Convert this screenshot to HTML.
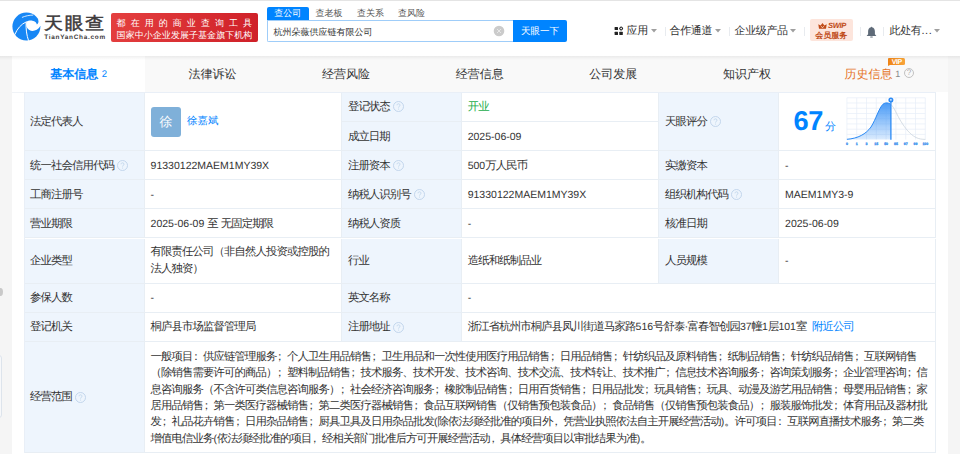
<!DOCTYPE html>
<html><head><meta charset="utf-8">
<style>
*{margin:0;padding:0;box-sizing:border-box}
html,body{width:960px;height:454px;overflow:hidden}
body{background:#f5f5f5;font-family:"Liberation Sans",sans-serif;color:#333;position:relative;text-rendering:geometricPrecision}
.a{position:absolute;white-space:nowrap}
#topline{position:absolute;left:0;top:0;width:960px;height:1px;background:#e4e4e4}
#hdr{position:absolute;left:0;top:1px;width:960px;height:55px;background:#fff}
#shd{position:absolute;left:0;top:56px;width:960px;height:4px;background:linear-gradient(rgba(0,0,0,.06),rgba(0,0,0,0));z-index:5}
#wrap{position:absolute;left:12px;top:92px;width:936px;height:362px;background:#fff}
.sep{position:absolute;top:27px;width:1px;height:8.7px;background:#e8ebef}
.caret{position:absolute;top:29.2px;width:6px;height:3.4px}
.nav{position:absolute;top:24.4px;font-size:11px;letter-spacing:-0.35px;line-height:14px;color:#333;white-space:nowrap}
#tabs{position:absolute;left:12px;top:56px;width:935.5px;height:36px;background:#f9f9f9}
.tab{position:absolute;top:0;height:36px;width:133.64px;text-align:center;font-size:12px;line-height:36px;color:#333;white-space:nowrap}
.c{position:absolute;border-right:1px solid #e8eef4;border-bottom:1px solid #e8eef4}
.lb{background:#eef5fd}
.t{position:absolute;font-size:11.4px;letter-spacing:-0.9px;line-height:14px;color:#333;white-space:nowrap}
.l{font-weight:normal;font-size:10.5px;letter-spacing:0}
.q{display:inline-block;vertical-align:-2.3px;margin-left:3.2px}
.p{font-style:normal;position:relative;left:-2.4px}
</style></head><body>
<div id="topline"></div>
<div id="hdr"></div>
<svg class="a" style="left:0;top:0" width="50" height="50" viewBox="0 0 50 50">
<circle cx="26.4" cy="26.6" r="14" fill="#1787f5"/>
<path d="M43 16 L38.1 19.4 C38.9 21.2 38.6 23.3 36.9 24.4 C36.5 22.6 35.1 21.1 32.3 20.7 C30 20.4 27.8 20.9 26.2 22 C26 24 26.2 26.5 27 27.8 C29.5 32.3 36.5 32.3 40.4 26.1 L43 26.1 Z" fill="#fff"/>
<path d="M22.3 17.3 C25.5 15.9 29 15.2 32.8 15.1" stroke="#fff" stroke-width="0.8" fill="none" stroke-linecap="round"/>
<path d="M14.7 34.8 C17.4 28.5 21 24.2 26.6 21.7" stroke="#fff" stroke-width="1" fill="none"/>
<path d="M26.1 22.5 C25.8 29 26.6 35 28.6 40.8" stroke="#fff" stroke-width="1" fill="none"/>
</svg>
<div class="a" style="left:44.2px;top:12.8px;font-size:17.2px;line-height:20px;letter-spacing:1.6px;transform:scaleX(1.1);transform-origin:0 0;color:#3d3a3b;-webkit-text-stroke:0.5px #3d3a3b">天眼查</div>
<div class="a" style="left:44.2px;top:33.5px;font-size:6.4px;line-height:8px;letter-spacing:0.74px;color:#3d3a3b;font-weight:bold">TianYanCha.com</div>
<div class="a" style="left:111px;top:12.8px;width:146.7px;height:29.2px;border-radius:2px;background:linear-gradient(100deg,#e43f3f,#cf2028);color:#fff;font-size:10px">
<div class="a" style="left:5.6px;top:5px;line-height:10px;font-size:9px;letter-spacing:5.05px">都在用的商业查询工具</div>
<div class="a" style="left:5.6px;top:17px;line-height:10px;font-size:9px;letter-spacing:0.05px">国家中小企业发展子基金旗下机构</div>
</div>
<div class="a" style="left:267px;top:6.5px;width:41.5px;height:13.5px;background:#0084ff;border-radius:2px 2px 0 0;color:#fff;font-size:9px;line-height:13.5px;text-align:center">查公司</div>
<div class="a" style="left:315.5px;top:6.5px;font-size:9px;line-height:13.5px;color:#555">查老板</div>
<div class="a" style="left:357px;top:6.5px;font-size:9px;line-height:13.5px;color:#555">查关系</div>
<div class="a" style="left:398px;top:6.5px;font-size:9px;line-height:13.5px;color:#555">查风险</div>
<div class="a" style="left:267px;top:19.5px;width:247px;height:22.7px;border:1.2px solid #9fcdf9;border-right:none;border-radius:0 0 0 2px;background:#fff"></div>
<div class="a" style="left:273.5px;top:24.5px;font-size:9px;line-height:14px;color:#333">杭州朵薇供应链有限公司</div>
<svg class="a" style="left:492.7px;top:24.6px" width="12" height="12" viewBox="0 0 12 12"><circle cx="6" cy="6" r="5.3" fill="#cbcbcb"/><path d="M4 4 L8 8 M8 4 L4 8" stroke="#eee" stroke-width="0.8"/></svg>
<div class="a" style="left:513px;top:19.6px;width:54px;height:22.5px;background:#0084ff;border-radius:0 2px 2px 0;color:#fff;font-size:9.5px;line-height:24.5px;text-align:center">天眼一下</div>
<svg class="a" style="left:612px;top:24px" width="14" height="14" viewBox="612 24 14 14"><rect x="614.6" y="26.9" width="3.4" height="3.2" rx="0.5" fill="#222"/><rect x="614.6" y="31.8" width="3.4" height="3.2" rx="0.5" fill="#222"/><rect x="619.3" y="31.8" width="3.5" height="3.2" rx="0.5" fill="#222"/><rect x="619.9" y="27.2" width="2.5" height="2.5" rx="0.6" transform="rotate(45 621.1 28.45)" fill="none" stroke="#222" stroke-width="1"/></svg>
<div class="nav" style="left:626.5px">应用</div><svg class="caret" style="left:650.7px" width="6" height="3.4" viewBox="0 0 6 3.4"><path d="M0 0 H6 L3 3.4 Z" fill="#9f9f9f"/></svg>
<div class="sep" style="left:664.5px"></div>
<div class="nav" style="left:669.5px">合作通道</div><svg class="caret" style="left:715.1px" width="6" height="3.4" viewBox="0 0 6 3.4"><path d="M0 0 H6 L3 3.4 Z" fill="#9f9f9f"/></svg>
<div class="sep" style="left:729px"></div>
<div class="nav" style="left:734.5px">企业级产品</div><svg class="caret" style="left:790.4px" width="6" height="3.4" viewBox="0 0 6 3.4"><path d="M0 0 H6 L3 3.4 Z" fill="#9f9f9f"/></svg>
<div class="sep" style="left:804px"></div>
<div class="a" style="left:810px;top:18.8px;width:43px;height:22.3px;top:19.1px;background:#fde5dc;border-radius:2px"></div>
<svg class="a" style="left:818.2px;top:22.8px" width="9" height="6" viewBox="0 0 9 6"><path d="M0.3 1.2 L2.6 2.6 L4.5 0 L6.4 2.6 L8.7 1.2 L8 5.8 L1 5.8 Z" fill="#c04b17"/><path d="M3.2 3.2 L4.5 4.8 L5.8 3.2" stroke="#fde5dc" stroke-width="0.8" fill="none"/></svg>
<div class="a" style="left:828px;top:21.3px;font-size:7.6px;line-height:9px;color:#c04b17;font-weight:bold;font-style:italic;letter-spacing:-0.4px">SWIP</div>
<div class="a" style="left:815.2px;top:30.5px;font-size:8px;line-height:10px;color:#c04b17;font-weight:bold">会员服务</div>
<div class="sep" style="left:859.5px"></div>
<svg class="a" style="left:866.3px;top:25.8px" width="11" height="12" viewBox="0 0 11 12"><path d="M5.5 0.4 L6 1.3 C8 1.8 8.9 3.4 8.9 5.6 L8.9 8.2 L10.4 9.9 L0.6 9.9 L2.1 8.2 L2.1 5.6 C2.1 3.4 3 1.8 5 1.3 Z" fill="#5e6a78"/><rect x="4.2" y="10.5" width="2.6" height="1.1" rx="0.5" fill="#5e6a78"/></svg>
<div class="sep" style="left:883px"></div>
<div class="nav" style="left:889.5px">此处有<span style="letter-spacing:0.6px">...</span></div><svg class="caret" style="left:934.4px" width="6" height="3.4" viewBox="0 0 6 3.4"><path d="M0 0 H6 L3 3.4 Z" fill="#9f9f9f"/></svg>

<div id="tabs">
  <div class="tab" style="left:0;width:133.1px;background:#fff;color:#0084ff;font-weight:bold">基本信息<span style="font-weight:normal;font-size:9.5px;margin-left:3.5px;vertical-align:1px">2</span></div>
  <div class="tab" style="left:133.64px">法律诉讼</div>
  <div class="tab" style="left:267.28px">经营风险</div>
  <div class="tab" style="left:400.92px">经营信息</div>
  <div class="tab" style="left:534.56px">公司发展</div>
  <div class="tab" style="left:668.2px">知识产权</div>
  <div class="tab" style="left:801.84px"></div>
<div class="a" style="left:832.6px;top:9.5px;font-size:12px;line-height:16px;color:#e5762c">历史信息</div>
<div class="a" style="left:883.3px;top:11px;font-size:9px;line-height:14px;color:#888">1</div>
<div class="a" style="left:891.7px;top:11.6px;width:10.6px;height:10.6px;border:1px solid #c2c2c2;border-radius:50%;font-size:8px;line-height:8.6px;text-align:center;color:#aaa">?</div>
<div class="a" style="left:876.4px;top:1.7px;width:16.6px;height:7.3px;background:linear-gradient(90deg,#ef8416,#f8a43a);border-radius:1px 1.5px 1.5px 0;color:#fff;font-size:7px;line-height:9.3px;font-weight:bold;text-align:center;letter-spacing:-0.4px;overflow:hidden">VIP</div>
<div class="a" style="left:876.4px;top:8.9px;width:0;height:0;border-top:1.8px solid #ef8416;border-right:2px solid transparent"></div>
</div>
<div id="wrap"></div>
<div id="shd"></div>
<div class="c lb" style="left:24.00px;top:92.00px;width:120.60px;height:59.20px"></div>
<div class="c" style="left:144.60px;top:92.00px;width:197.30px;height:59.20px"></div>
<div class="c lb" style="left:341.90px;top:92.00px;width:119.80px;height:30.10px"></div>
<div class="c" style="left:461.70px;top:92.00px;width:197.40px;height:30.10px"></div>
<div class="c lb" style="left:341.90px;top:122.10px;width:119.80px;height:29.10px"></div>
<div class="c" style="left:461.70px;top:122.10px;width:197.40px;height:29.10px"></div>
<div class="c lb" style="left:659.10px;top:92.00px;width:120.00px;height:59.20px"></div>
<div class="c" style="left:779.10px;top:92.00px;width:156.50px;height:59.20px"></div>
<div class="c lb" style="left:24.00px;top:151.20px;width:120.60px;height:29.10px"></div>
<div class="c" style="left:144.60px;top:151.20px;width:197.30px;height:29.10px"></div>
<div class="c lb" style="left:341.90px;top:151.20px;width:119.80px;height:29.10px"></div>
<div class="c" style="left:461.70px;top:151.20px;width:197.40px;height:29.10px"></div>
<div class="c lb" style="left:659.10px;top:151.20px;width:120.00px;height:29.10px"></div>
<div class="c" style="left:779.10px;top:151.20px;width:156.50px;height:29.10px"></div>
<div class="c lb" style="left:24.00px;top:180.30px;width:120.60px;height:29.10px"></div>
<div class="c" style="left:144.60px;top:180.30px;width:197.30px;height:29.10px"></div>
<div class="c lb" style="left:341.90px;top:180.30px;width:119.80px;height:29.10px"></div>
<div class="c" style="left:461.70px;top:180.30px;width:197.40px;height:29.10px"></div>
<div class="c lb" style="left:659.10px;top:180.30px;width:120.00px;height:29.10px"></div>
<div class="c" style="left:779.10px;top:180.30px;width:156.50px;height:29.10px"></div>
<div class="c lb" style="left:24.00px;top:209.40px;width:120.60px;height:29.10px"></div>
<div class="c" style="left:144.60px;top:209.40px;width:197.30px;height:29.10px"></div>
<div class="c lb" style="left:341.90px;top:209.40px;width:119.80px;height:29.10px"></div>
<div class="c" style="left:461.70px;top:209.40px;width:197.40px;height:29.10px"></div>
<div class="c lb" style="left:659.10px;top:209.40px;width:120.00px;height:29.10px"></div>
<div class="c" style="left:779.10px;top:209.40px;width:156.50px;height:29.10px"></div>
<div class="c lb" style="left:24.00px;top:238.50px;width:120.60px;height:45.50px"></div>
<div class="c" style="left:144.60px;top:238.50px;width:197.30px;height:45.50px"></div>
<div class="c lb" style="left:341.90px;top:238.50px;width:119.80px;height:45.50px"></div>
<div class="c" style="left:461.70px;top:238.50px;width:197.40px;height:45.50px"></div>
<div class="c lb" style="left:659.10px;top:238.50px;width:120.00px;height:45.50px"></div>
<div class="c" style="left:779.10px;top:238.50px;width:156.50px;height:45.50px"></div>
<div class="c lb" style="left:24.00px;top:284.00px;width:120.60px;height:28.60px"></div>
<div class="c" style="left:144.60px;top:284.00px;width:197.30px;height:28.60px"></div>
<div class="c lb" style="left:341.90px;top:284.00px;width:119.80px;height:28.60px"></div>
<div class="c" style="left:461.70px;top:284.00px;width:473.90px;height:28.60px"></div>
<div class="c lb" style="left:24.00px;top:312.60px;width:120.60px;height:29.10px"></div>
<div class="c" style="left:144.60px;top:312.60px;width:197.30px;height:29.10px"></div>
<div class="c lb" style="left:341.90px;top:312.60px;width:119.80px;height:29.10px"></div>
<div class="c" style="left:461.70px;top:312.60px;width:473.90px;height:29.10px"></div>
<div class="c lb" style="left:24.00px;top:341.70px;width:120.60px;height:111.30px"></div>
<div class="c" style="left:144.60px;top:341.70px;width:791.00px;height:111.30px"></div>
<div class="t" style="left:30.00px;top:114.70px;">法定代表人</div>
<div class="t" style="left:347.90px;top:100.15px;">登记状态<svg class="q" width="11" height="11" viewBox="0 0 11 11"><circle cx="5.5" cy="5.5" r="5" fill="none" stroke="#bdd3ea" stroke-width="0.9"/><path d="M4 4.3 C4 3.3 4.7 2.8 5.5 2.8 C6.4 2.8 7 3.4 7 4.2 C7 5.2 5.6 5.4 5.6 6.6" fill="none" stroke="#bdd3ea" stroke-width="0.85"/><circle cx="5.6" cy="8" r="0.55" fill="#bdd3ea"/></svg></div>
<div class="t" style="left:467.70px;top:100.15px;color:#1aad4b">开业</div>
<div class="t" style="left:347.90px;top:129.75px;">成立日期</div>
<div class="t" style="left:467.70px;top:129.75px;"><b class="l">2025-06-09</b></div>
<div class="t" style="left:665.10px;top:114.70px;">天眼评分<svg class="q" width="11" height="11" viewBox="0 0 11 11"><circle cx="5.5" cy="5.5" r="5" fill="none" stroke="#bdd3ea" stroke-width="0.9"/><path d="M4 4.3 C4 3.3 4.7 2.8 5.5 2.8 C6.4 2.8 7 3.4 7 4.2 C7 5.2 5.6 5.4 5.6 6.6" fill="none" stroke="#bdd3ea" stroke-width="0.85"/><circle cx="5.6" cy="8" r="0.55" fill="#bdd3ea"/></svg></div>
<div class="t" style="left:30.00px;top:158.85px;">统一社会信用代码<svg class="q" width="11" height="11" viewBox="0 0 11 11"><circle cx="5.5" cy="5.5" r="5" fill="none" stroke="#bdd3ea" stroke-width="0.9"/><path d="M4 4.3 C4 3.3 4.7 2.8 5.5 2.8 C6.4 2.8 7 3.4 7 4.2 C7 5.2 5.6 5.4 5.6 6.6" fill="none" stroke="#bdd3ea" stroke-width="0.85"/><circle cx="5.6" cy="8" r="0.55" fill="#bdd3ea"/></svg></div>
<div class="t" style="left:150.60px;top:158.85px;"><b class="l">91330122MAEM1MY39X</b></div>
<div class="t" style="left:347.90px;top:158.85px;">注册资本<svg class="q" width="11" height="11" viewBox="0 0 11 11"><circle cx="5.5" cy="5.5" r="5" fill="none" stroke="#bdd3ea" stroke-width="0.9"/><path d="M4 4.3 C4 3.3 4.7 2.8 5.5 2.8 C6.4 2.8 7 3.4 7 4.2 C7 5.2 5.6 5.4 5.6 6.6" fill="none" stroke="#bdd3ea" stroke-width="0.85"/><circle cx="5.6" cy="8" r="0.55" fill="#bdd3ea"/></svg></div>
<div class="t" style="left:467.70px;top:158.85px;"><b class="l">500</b>万人民币</div>
<div class="t" style="left:665.10px;top:158.85px;">实缴资本</div>
<div class="t" style="left:785.10px;top:158.85px;"><b class="l">-</b></div>
<div class="t" style="left:30.00px;top:187.95px;">工商注册号</div>
<div class="t" style="left:150.60px;top:187.95px;"><b class="l">-</b></div>
<div class="t" style="left:347.90px;top:187.95px;">纳税人识别号<svg class="q" width="11" height="11" viewBox="0 0 11 11"><circle cx="5.5" cy="5.5" r="5" fill="none" stroke="#bdd3ea" stroke-width="0.9"/><path d="M4 4.3 C4 3.3 4.7 2.8 5.5 2.8 C6.4 2.8 7 3.4 7 4.2 C7 5.2 5.6 5.4 5.6 6.6" fill="none" stroke="#bdd3ea" stroke-width="0.85"/><circle cx="5.6" cy="8" r="0.55" fill="#bdd3ea"/></svg></div>
<div class="t" style="left:467.70px;top:187.95px;"><b class="l">91330122MAEM1MY39X</b></div>
<div class="t" style="left:665.10px;top:187.95px;">组织机构代码<svg class="q" width="11" height="11" viewBox="0 0 11 11"><circle cx="5.5" cy="5.5" r="5" fill="none" stroke="#bdd3ea" stroke-width="0.9"/><path d="M4 4.3 C4 3.3 4.7 2.8 5.5 2.8 C6.4 2.8 7 3.4 7 4.2 C7 5.2 5.6 5.4 5.6 6.6" fill="none" stroke="#bdd3ea" stroke-width="0.85"/><circle cx="5.6" cy="8" r="0.55" fill="#bdd3ea"/></svg></div>
<div class="t" style="left:785.10px;top:187.95px;"><b class="l">MAEM1MY3-9</b></div>
<div class="t" style="left:30.00px;top:217.05px;">营业期限</div>
<div class="t" style="left:150.60px;top:217.05px;"><b class="l">2025-06-09 </b>至<b class="l"> </b>无固定期限</div>
<div class="t" style="left:347.90px;top:217.05px;">纳税人资质</div>
<div class="t" style="left:467.70px;top:217.05px;"><b class="l">-</b></div>
<div class="t" style="left:665.10px;top:217.05px;">核准日期</div>
<div class="t" style="left:785.10px;top:217.05px;"><b class="l">2025-06-09</b></div>
<div class="t" style="left:30.00px;top:254.35px;">企业类型</div>
<div class="t" style="left:347.90px;top:254.35px;">行业</div>
<div class="t" style="left:467.70px;top:254.35px;">造纸和纸制品业</div>
<div class="t" style="left:665.10px;top:254.35px;">人员规模</div>
<div class="t" style="left:785.10px;top:254.35px;"><b class="l">-</b></div>
<div class="t" style="left:150.60px;top:244.25px;line-height:16.5px">有限责任公司（非自然人投资或控股的<br>法人独资）</div>
<div class="t" style="left:30.00px;top:291.40px;">参保人数</div>
<div class="t" style="left:150.60px;top:291.40px;"><b class="l">-</b></div>
<div class="t" style="left:347.90px;top:291.40px;">英文名称</div>
<div class="t" style="left:467.70px;top:291.40px;"><b class="l">-</b></div>
<div class="t" style="left:30.00px;top:320.25px;">登记机关</div>
<div class="t" style="left:150.60px;top:320.25px;">桐庐县市场监督管理局</div>
<div class="t" style="left:347.90px;top:320.25px;">注册地址<svg class="q" width="11" height="11" viewBox="0 0 11 11"><circle cx="5.5" cy="5.5" r="5" fill="none" stroke="#bdd3ea" stroke-width="0.9"/><path d="M4 4.3 C4 3.3 4.7 2.8 5.5 2.8 C6.4 2.8 7 3.4 7 4.2 C7 5.2 5.6 5.4 5.6 6.6" fill="none" stroke="#bdd3ea" stroke-width="0.85"/><circle cx="5.6" cy="8" r="0.55" fill="#bdd3ea"/></svg></div>
<div class="t" style="left:467.70px;top:320.25px;">浙江省杭州市桐庐县凤川街道马家路<b class="l">516</b>号舒泰·富春智创园<b class="l">37</b>幢<b class="l">1</b>层<b class="l">101</b>室<span style="color:#0084ff;margin-left:5.6px">附近公司</span></div>
<div class="t" style="left:30.00px;top:390.45px;">经营范围<svg class="q" width="11" height="11" viewBox="0 0 11 11"><circle cx="5.5" cy="5.5" r="5" fill="none" stroke="#bdd3ea" stroke-width="0.9"/><path d="M4 4.3 C4 3.3 4.7 2.8 5.5 2.8 C6.4 2.8 7 3.4 7 4.2 C7 5.2 5.6 5.4 5.6 6.6" fill="none" stroke="#bdd3ea" stroke-width="0.85"/><circle cx="5.6" cy="8" r="0.55" fill="#bdd3ea"/></svg></div>
<div class="t" style="left:150.60px;top:349.05px;line-height:16.3px">一般项目<i class="p">：</i>供应链管理服务<i class="p">；</i>个人卫生用品销售<i class="p">；</i>卫生用品和一次性使用医疗用品销售<i class="p">；</i>日用品销售<i class="p">；</i>针纺织品及原料销售<i class="p">；</i>纸制品销售<i class="p">；</i>针纺织品销售<i class="p">；</i>互联网销售<br>（除销售需要许可的商品）<i class="p">；</i>塑料制品销售<i class="p">；</i>技术服务、技术开发、技术咨询、技术交流、技术转让、技术推广<i class="p">；</i>信息技术咨询服务<i class="p">；</i>咨询策划服务<i class="p">；</i>企业管理咨询<i class="p">；</i>信<br>息咨询服务（不含许可类信息咨询服务）<i class="p">；</i>社会经济咨询服务<i class="p">；</i>橡胶制品销售<i class="p">；</i>日用百货销售<i class="p">；</i>日用品批发<i class="p">；</i>玩具销售<i class="p">；</i>玩具、动漫及游艺用品销售<i class="p">；</i>母婴用品销售<i class="p">；</i>家<br>居用品销售<i class="p">；</i>第一类医疗器械销售<i class="p">；</i>第二类医疗器械销售<i class="p">；</i>食品互联网销售（仅销售预包装食品）<i class="p">；</i>食品销售（仅销售预包装食品）<i class="p">；</i>服装服饰批发<i class="p">；</i>体育用品及器材批<br>发<i class="p">；</i>礼品花卉销售<i class="p">；</i>日用杂品销售<i class="p">；</i>厨具卫具及日用杂品批发<b class="l">(</b>除依法须经批准的项目外<i class="p">，</i>凭营业执照依法自主开展经营活动<b class="l">)</b>。许可项目<i class="p">：</i>互联网直播技术服务<i class="p">；</i>第二类<br>增值电信业务<b class="l">(</b>依法须经批准的项目<i class="p">，</i>经相关部门批准后方可开展经营活动<i class="p">，</i>具体经营项目以审批结果为准<b class="l">)</b>。</div>
<div style="position:absolute;left:24px;top:92px;width:911.6px;height:1px;background:#e9eff7"></div>
<div style="position:absolute;left:24px;top:92px;width:1px;height:361px;background:#e9eff7"></div>

<div class="a" style="left:151px;top:106.5px;width:30px;height:30px;border-radius:3px;background:#7fb0d9;color:#fff;font-size:13px;line-height:30px;text-align:center">徐</div>
<div class="a" style="left:187px;top:114px;font-size:10.5px;line-height:14px;color:#0084ff">徐嘉斌</div>
<div class="a" style="left:793.5px;top:106.4px;font-size:27.2px;line-height:30px;color:#0084ff;font-weight:bold;letter-spacing:-0.4px">67</div>
<div class="a" style="left:825px;top:119.6px;font-size:11px;line-height:14px;color:#0084ff">分</div>
<svg class="a" style="left:840px;top:92px" width="95" height="58" viewBox="840 92 95 58">
<defs><linearGradient id="gf" x1="0" y1="0" x2="0" y2="1"><stop offset="0" stop-color="#3b93f6" stop-opacity="0.92"/><stop offset="1" stop-color="#3b93f6" stop-opacity="0.18"/></linearGradient></defs>
<g stroke="#e6eef8" stroke-width="0.7" fill="none">
<path d="M846.9 97.8 V139.6 M856.7 97.8 V139.6 M866.5 97.8 V139.6 M876.3 97.8 V139.6 M886.1 97.8 V139.6 M895.9 97.8 V139.6 M905.7 97.8 V139.6 M915.5 97.8 V139.6 M925.3 97.8 V139.6"/>
<path d="M846.9 97.8 H925.3 M846.9 103 H925.3 M846.9 108.3 H925.3 M846.9 113.5 H925.3 M846.9 118.7 H925.3 M846.9 123.9 H925.3 M846.9 129.2 H925.3 M846.9 134.4 H925.3"/>
</g>
<path d="M846.9 139.3 C858 138.5 866 134 871 127 C876 119 879 108 883 104.2 C885.5 102.3 888.5 102.6 890.9 104.5 L890.9 139.6 L846.9 139.6 Z" fill="url(#gf)"/>
<path d="M846.9 139.3 C858 138.5 866 134 871 127 C876 119 879 108 883 104.2 C885.5 102.3 888.5 102.6 890.9 104.5" stroke="#2b8af5" stroke-width="1" fill="none"/>
<path d="M890.9 104.5 C894 107 897 115 901 121.5 C905 128 910 134.5 916 137.5 C919 139 922 139.3 925.4 139.4" stroke="#c6d0da" stroke-width="0.7" fill="none"/>
<path d="M890.9 101.5 V139.8" stroke="#2b8af5" stroke-width="1.3"/>
<circle cx="890.9" cy="99.9" r="2.5" fill="#2b8af5"/><circle cx="890.9" cy="99.9" r="0.8" fill="#fff"/>
<g fill="#4b98ee" stroke="#4b98ee" stroke-width="0.7" font-family="Liberation Sans" font-weight="bold" text-anchor="middle"><text transform="translate(846.9 144.6) scale(0.5)" font-size="7" x="0" y="0">0</text><text transform="translate(856.7 144.6) scale(0.5)" font-size="7" x="0" y="0">1</text><text transform="translate(866.5 144.6) scale(0.5)" font-size="7" x="0" y="0">3</text><text transform="translate(876.3 144.6) scale(0.5)" font-size="7" x="0" y="0">15</text><text transform="translate(886.1 144.6) scale(0.5)" font-size="7" x="0" y="0">50</text><text transform="translate(895.9 144.6) scale(0.5)" font-size="7" x="0" y="0">85</text><text transform="translate(905.7 144.6) scale(0.5)" font-size="7" x="0" y="0">97</text><text transform="translate(915.5 144.6) scale(0.5)" font-size="7" x="0" y="0">99</text><text transform="translate(925.3 144.6) scale(0.5)" font-size="7" x="0" y="0">100</text></g>
</svg>
<div class="a" style="left:-3px;top:287.6px;width:5.5px;height:8.8px;border-radius:50%;background:#c9c9c9"></div>
<div class="a" style="left:-10px;top:354.8px;width:12.2px;height:63.6px;border:1px solid #dde4ec;border-radius:3px;background:#f7f8fa"></div>
<div class="a" style="left:12px;top:91.6px;width:12px;height:1px;background:#f0f3f7"></div>
</body></html>
